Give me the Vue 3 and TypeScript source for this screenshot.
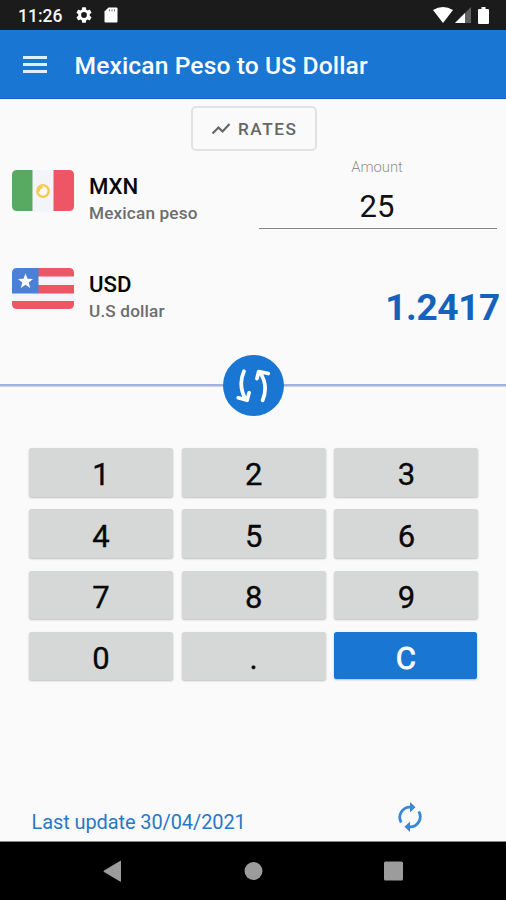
<script setup lang="ts">
import { ref } from 'vue'

const title = 'Mexican Peso to US Dollar'
const amount = ref('25')
const result = ref('1.2417')
const keys: string[] = ['1', '2', '3', '4', '5', '6', '7', '8', '9', '0', '.', 'C']
</script>

<template>
  <div class="screen">
    <header class="status">
      <span class="clock">11:26</span>
      <svg class="gear" viewBox="2 2 20 20"><path d="M19.14 12.94c.04-.3.06-.61.06-.94 0-.32-.02-.64-.07-.94l2.03-1.58a.49.49 0 0 0 .12-.61l-1.92-3.32a.488.488 0 0 0-.59-.22l-2.39.96c-.5-.38-1.03-.7-1.62-.94l-.36-2.54a.484.484 0 0 0-.48-.41h-3.84c-.24 0-.43.17-.47.41l-.36 2.54c-.59.24-1.13.57-1.62.94l-2.39-.96c-.22-.08-.47 0-.59.22L2.74 8.87c-.12.21-.08.47.12.61l2.03 1.58c-.05.3-.09.63-.09.94s.02.64.07.94l-2.03 1.58a.49.49 0 0 0-.12.61l1.92 3.32c.12.22.37.29.59.22l2.39-.96c.5.38 1.03.7 1.62.94l.36 2.54c.05.24.24.41.48.41h3.84c.24 0 .44-.17.47-.41l.36-2.54c.59-.24 1.13-.56 1.62-.94l2.39.96c.22.08.47 0 .59-.22l1.92-3.32c.12-.22.07-.47-.12-.61l-2.01-1.58zM12 15.6A3.6 3.6 0 1 1 12 8.400a3.600 3.600 0 0 1 0 7.200z" /></svg>
      <svg class="card" viewBox="0 0 14 16"><path d="M4.500.5H12.500Q13.500.5 13.500 1.500V14.500Q13.500 15.500 12.500 15.500H1.500Q.5 15.500.5 14.500V4.500Z" /><path class="slots" d="M5.500 2.300v2M8 2.300v2M10.500 2.300v2" /></svg>
      <svg class="wifi" viewBox="0 0 20 16"><path d="M0 3Q10-3 20 3L10 16Z" /></svg>
      <svg class="signal" viewBox="0 0 16 16"><path class="dim" d="M16 0V16H0Z" /><path d="M10 6V16H0Z" /></svg>
      <svg class="battery" viewBox="0 0 11 17"><path d="M3.500 0h4v2H10q1 0 1 1v13q0 1-1 1H1q-1 0-1-1V3q0-1 1-1h2.500z" /></svg>
    </header>

    <nav class="appbar">
      <button class="menu" aria-label="Menu"><i></i><i></i><i></i></button>
      <h1>{{ title }}</h1>
    </nav>

    <main>
      <button class="rates">
        <svg viewBox="0 0 20 12"><path d="M1.500 10.500L7.500 4.500L11.500 8.500L18.500 1" /></svg>
        <span>RATES</span>
      </button>

      <section class="row source">
        <svg class="flag" viewBox="0 0 62 42">
          <path fill="#f3f5fb" d="M20 0h22v42H20z" />
          <path fill="#58aa62" d="M5 0H20.500V41H5Q0 41 0 36V5Q0 0 5 0Z" />
          <path fill="#ee5565" d="M41.500 0H57Q62 0 62 5V36Q62 41 57 41H41.500Z" />
          <circle cx="31" cy="21" r="5.700" fill="#fffaf0" stroke="#f6cb52" stroke-width="2.400" />
          <path fill="#f6cb52" d="M26 17.500l4-1.500 1 2-3 1.500v2l-2 .5z" />
        </svg>
        <div class="names"><strong>MXN</strong><span>Mexican peso</span></div>
        <div class="field"><label>Amount</label><output>{{ amount }}</output></div>
      </section>

      <section class="row target">
        <svg class="flag" viewBox="0 0 62 42">
          <path fill="#f3f5fb" d="M0 8h62v26H0z" />
          <path fill="#ee5565" d="M26 0H57Q62 0 62 5V8.500H26ZM26 17H62V25.500H26ZM0 33H62V36Q62 41 57 41H5Q0 41 0 36Z" />
          <path fill="#4a80d5" d="M5 0H26.500V25.500H0V5Q0 0 5 0Z" />
          <path fill="#fff" d="M13.500 5.500l2 5.200 5.500.3-4.300 3.500 1.500 5.400-4.700-3.100-4.700 3.100 1.500-5.400L6 11l5.500-.3z" />
        </svg>
        <div class="names"><strong>USD</strong><span>U.S dollar</span></div>
        <output class="result">{{ result }}</output>
      </section>

      <div class="divider">
        <button class="swap" aria-label="Swap currencies">
          <svg viewBox="0 0 62 62"><path d="M21.300 16.500Q15 31 23 45M15.500 43.500L24.500 46L26.500 38.500M40.300 46Q46.500 31 37.500 17.500M34.500 24L36.300 16.800L46 18.800" /></svg>
        </button>
      </div>

      <section class="keypad">
        <button v-for="key in keys" :key="key" :class="{ clear: key === 'C' }">{{ key }}</button>
      </section>

      <footer>
        <span>Last update 30/04/2021</span>
        <svg viewBox="0 0 24 30"><path class="arc" d="M3.200 20.500A10.200 10.200 0 0 1 12.500 5.200M20.800 9.500A10.200 10.200 0 0 1 11.500 24.800" /><path d="M12 0L17.500 5.200L12 10.400ZM12 19.600V30L6.500 24.800Z" /></svg>
      </footer>
    </main>

    <div class="system">
      <svg viewBox="0 0 506 58"><path d="M121 19V39Q121 40 120 39.500L104 30Q103 29.300 104 28.500L120 19Q121 18.500 121 19Z" /><circle cx="253.500" cy="29" r="9" /><rect x="384" y="19.500" width="19" height="19" rx="1.500" /></svg>
    </div>
  </div>
</template>

<style>
body {
  margin: 0;
}
</style>

<style scoped>
.screen {
  width: 506px;
  height: 900px;
  display: flex;
  flex-direction: column;
  overflow: hidden;
  background: #fafafa;
  font-family: Roboto, "Liberation Sans", sans-serif;
  color: #050505;
}
button {
  font-family: inherit;
  border: 0;
  padding: 0;
}
.status {
  box-sizing: border-box;
  height: 30px;
  flex: none;
  display: flex;
  align-items: center;
  padding: 0 16px 0 18px;
  background: #1b1b1b;
  color: #f5f5f5;
}
.status svg { fill: #fff; }
.clock {
  width: 58px;
  padding-top: 2px;
  font-size: 17.5px;
  font-weight: 500;
}
.gear { width: 16px; height: 16px; }
.card { width: 14px; height: 16px; margin-left: 12px; }
.slots { stroke: #777; }
.wifi { width: 20px; height: 16px; margin-left: auto; margin-right: 2px; }
.signal { width: 16px; height: 16px; margin-right: 7px; }
.signal .dim { fill: #606060; }
.battery { width: 11px; height: 17px; margin-right: 1px; }
.appbar {
  box-sizing: border-box;
  height: 69px;
  flex: none;
  display: flex;
  align-items: center;
  padding: 2px 23px 0;
  background: #1976d2;
  border-bottom: 1px solid #1262b8;
  color: #fff;
}
.menu {
  width: 24px;
  display: flex;
  flex-direction: column;
  gap: 4px;
  margin-right: 27.500px;
  margin-top: -1px;
  background: none;
}
.menu i { height: 3px; background: #e3eefb; }
h1 {
  margin: 1px 0 0;
  font-size: 24.6px;
  line-height: 30px;
  font-weight: 500;
  letter-spacing: .12px;
  white-space: nowrap;
}
main {
  flex: 1;
  display: flex;
  flex-direction: column;
  border-top: 1px solid #e4f2f9;
}
.rates {
  box-sizing: border-box;
  width: 126px;
  height: 45px;
  margin: 6px auto 0 191px;
  flex: none;
  border: 2px solid #e2e2e2;
  border-radius: 5px;
  background: #fafafa;
  display: flex;
  align-items: center;
  padding-left: 18px;
  gap: 7px;
  color: #666;
  font-size: 17.2px;
  font-weight: 500;
  letter-spacing: 1.55px;
}
.rates svg { width: 20px; height: 12px; }
.rates path { fill: none; stroke: #666; stroke-width: 2.200; }
.row {
  display: flex;
  align-items: flex-start;
  padding-left: 12px;
  flex: none;
}
.source { height: 98px; margin-top: 6px; }
.target { height: 98px; }
.flag { width: 62px; height: 42px; margin-top: 13px; }
.names {
  display: flex;
  flex-direction: column;
  width: 155px;
  margin: 16px 0 0 15px;
}
.names strong { font-size: 22.2px; line-height: 26px; font-weight: 500; }
.names span { font-size: 17.2px; line-height: 28px; font-weight: 500; letter-spacing: .15px; color: #6d6d6d; }
.field {
  width: 238px;
  height: 71px;
  margin-left: 14.500px;
  border-bottom: 1.500px solid #858585;
  display: flex;
  flex-direction: column;
  align-items: center;
}
.field label { font-size: 14.8px; line-height: 18px; color: #929292; font-weight: 300; margin: 1px 1px 0 0; }
.field output { font-size: 31px; line-height: 36px; margin: 13px 1px 0 0; color: #111; }
.result {
  margin: 31px 6px 0 auto;
  font-size: 37px;
  line-height: 44px;
  font-weight: 700;
  letter-spacing: -.35px;
  color: #1562bd;
}
.divider {
  height: 62px;
  margin-top: 1.500px;
  display: flex;
  align-items: center;
  justify-content: center;
  background: linear-gradient(#a3b1dc, #a3b1dc) center / 100% 2.500px no-repeat;
}
.swap {
  width: 61px;
  height: 61px;
  margin-left: 1px;
  border-radius: 50%;
  background: #1976d2;
}
.swap svg { display: block; width: 61px; height: 61px; }
.swap path { fill: none; stroke: #fff; stroke-width: 3.800; stroke-linecap: round; stroke-linejoin: round; }
.keypad {
  display: grid;
  grid-template-columns: repeat(3, 144px);
  grid-auto-rows: 48.500px;
  gap: 12.800px 8.700px;
  margin: 31.500px 0 0 29px;
}
.keypad button {
  background: #d6d8d7;
  border-radius: 2.500px;
  box-shadow: 0 1px 2px #0000003d;
  font-size: 31px;
  line-height: 36px;
  font-weight: 400;
  -webkit-text-stroke: .35px currentColor;
  padding-top: 6px;
  color: #080808;
}
.keypad .clear {
  width: 143px;
  height: 47.500px;
  background: #1976d2;
  color: #fff;
  -webkit-text-stroke-width: .8px;
}
footer {
  margin-top: auto;
  display: flex;
  align-items: center;
  padding: 0 84px 7px 31.500px;
  justify-content: space-between;
  border-bottom: 1px solid #858585;
  color: #2878c9;
  font-size: 20px;
}
footer span { padding-top: 13px; letter-spacing: -.1px; }
footer svg { width: 24px; height: 30px; margin-top: 2px; fill: #3988d6; }
.arc { fill: none; stroke: #3988d6; stroke-width: 2.800; }
.system { height: 58px; flex: none; background: #000; }
.system svg { display: block; width: 506px; height: 58px; fill: #9c9c9c; }
</style>
